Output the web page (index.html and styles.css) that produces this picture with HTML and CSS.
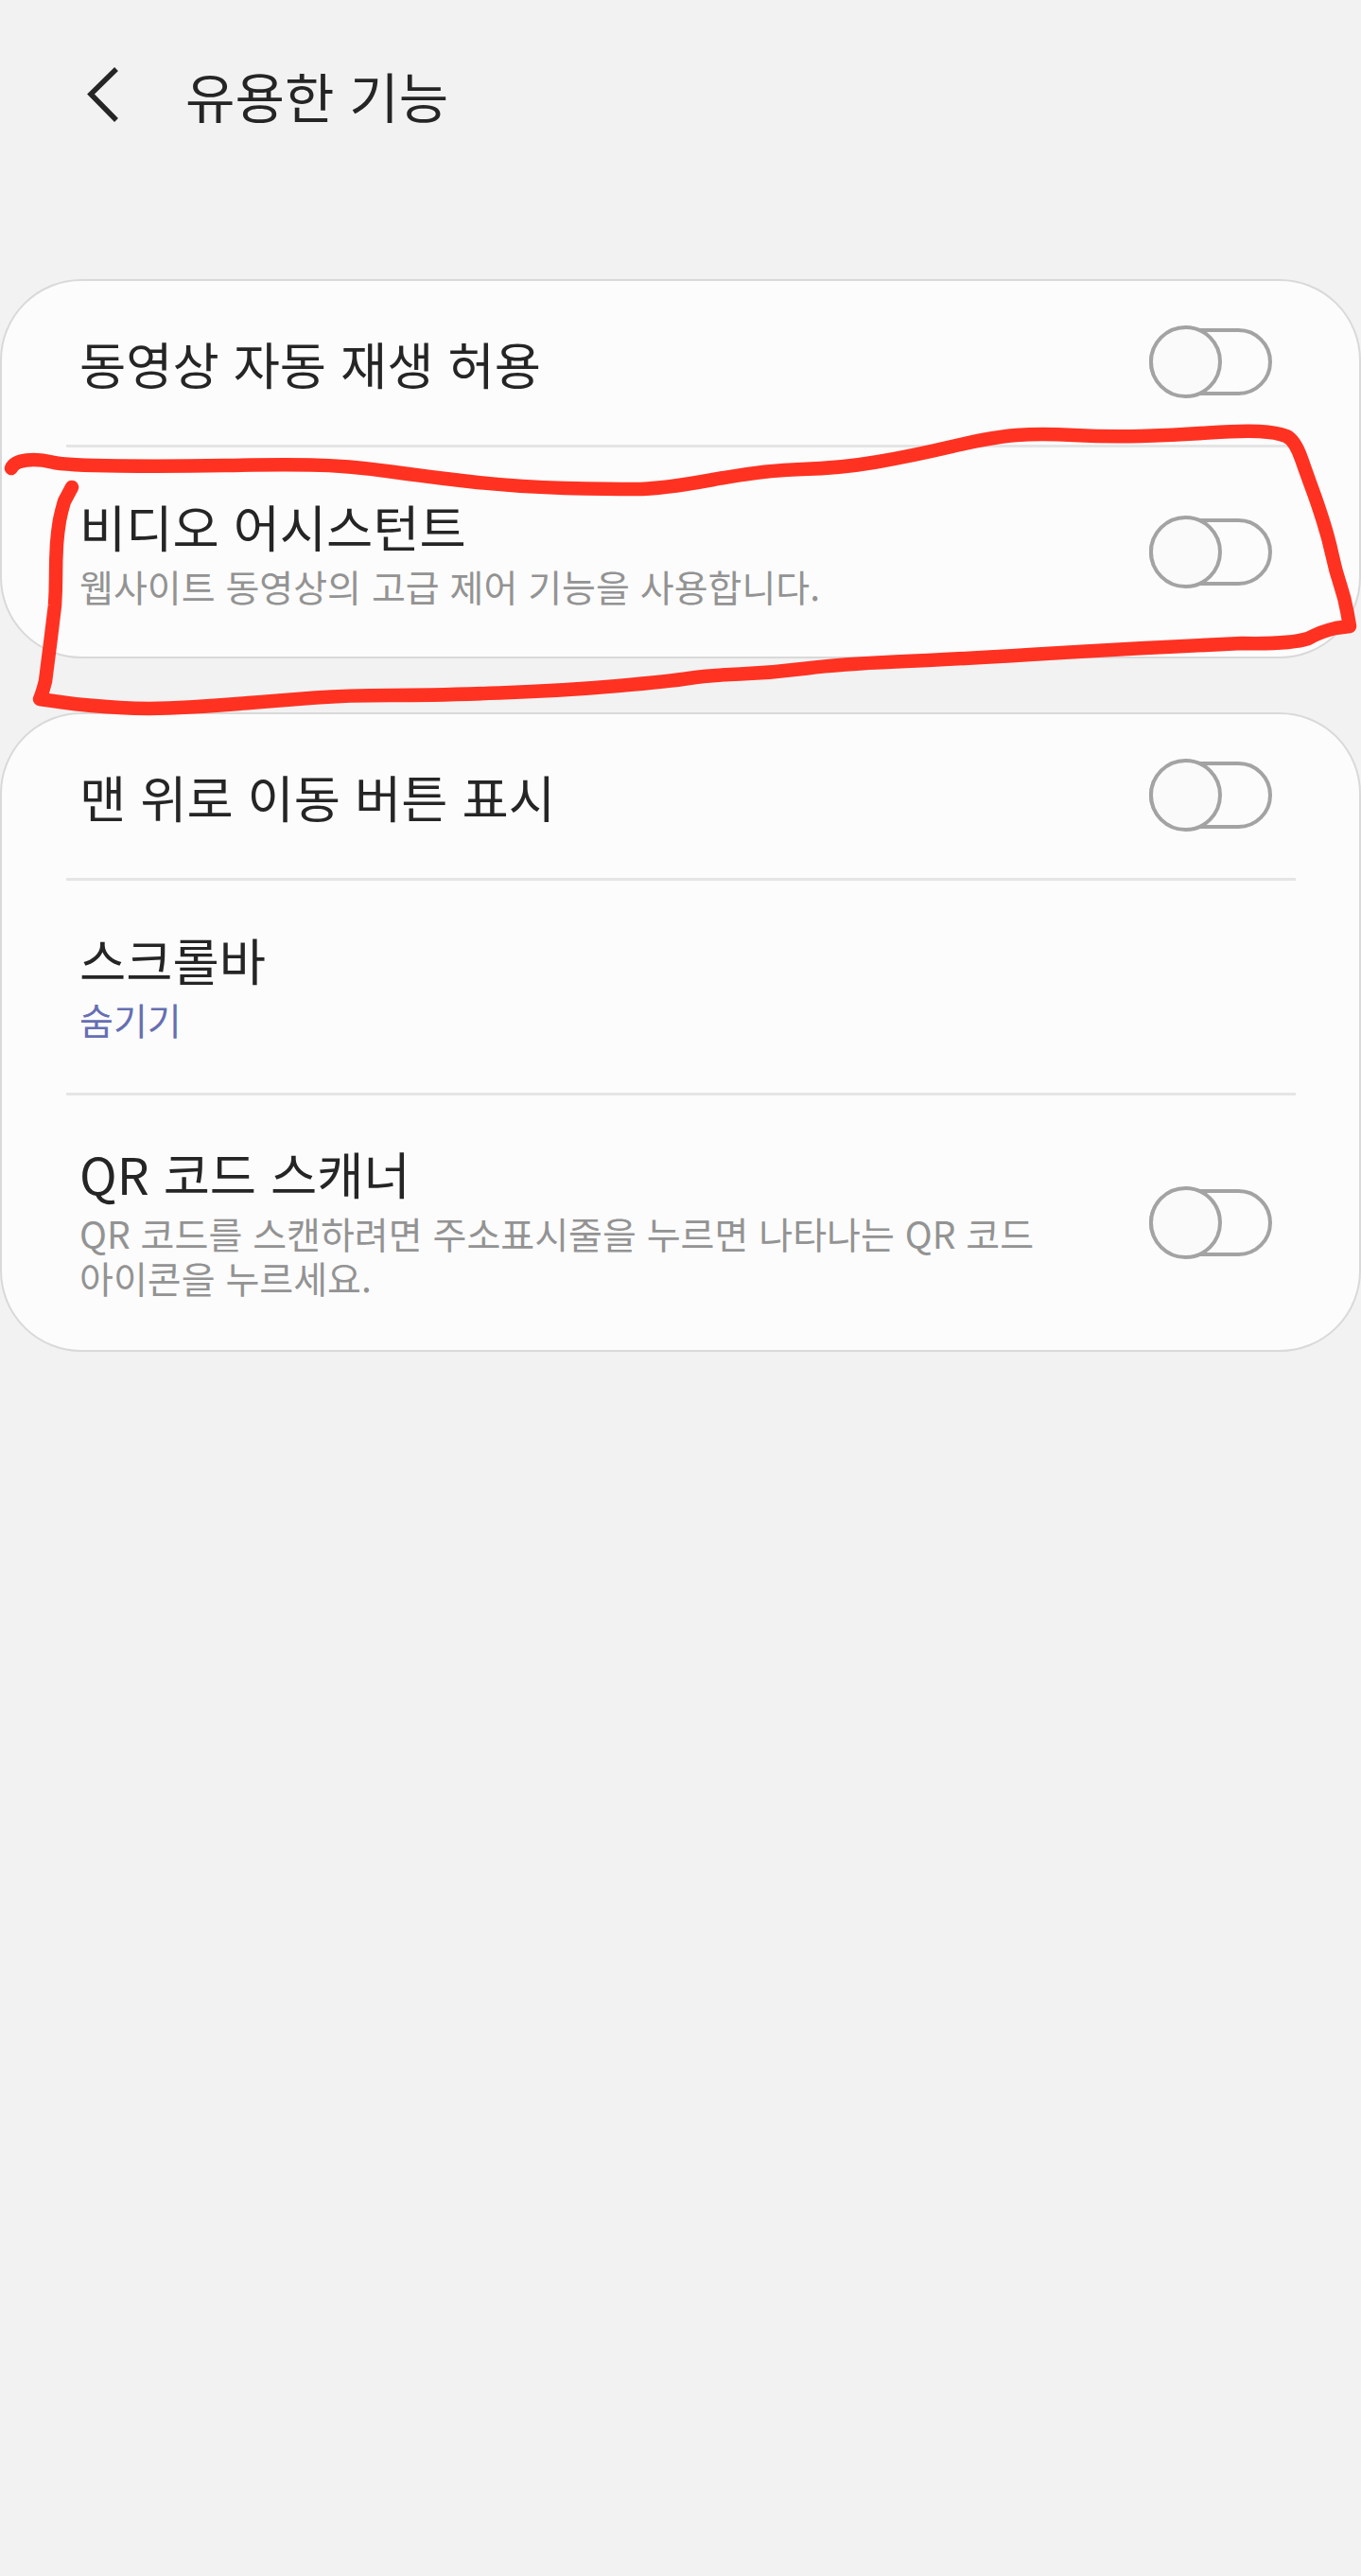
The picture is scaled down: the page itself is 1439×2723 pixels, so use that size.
FILE: index.html
```html
<!DOCTYPE html>
<html lang="ko">
<head>
<meta charset="utf-8">
<title>유용한 기능</title>
<link rel="stylesheet" href="styles.css">
</head>
<body>
<header class="appbar">
  <svg class="back" viewBox="0 0 36 60" aria-hidden="true"><path d="M32 3 L5 29.5 L32 57" /></svg>
  <h1 class="appbar-title">유용한 기능</h1>
</header>
<main class="cards">
  <section class="card">
    <div class="row row-single">
      <div class="row-text"><div class="row-title">동영상 자동 재생 허용</div></div>
      <div class="toggle"><span class="thumb"></span></div>
    </div>
    <div class="divider"></div>
    <div class="row row-double">
      <div class="row-text row-text-nudge">
        <div class="row-title">비디오 어시스턴트</div>
        <div class="row-sub">웹사이트 동영상의 고급 제어 기능을 사용합니다.</div>
      </div>
      <div class="toggle"><span class="thumb"></span></div>
    </div>
  </section>
  <section class="card">
    <div class="row row-single">
      <div class="row-text"><div class="row-title">맨 위로 이동 버튼 표시</div></div>
      <div class="toggle"><span class="thumb"></span></div>
    </div>
    <div class="divider"></div>
    <div class="row row-link">
      <div class="row-text row-text-up">
        <div class="row-title">스크롤바</div>
        <div class="row-sub row-sub-accent">숨기기</div>
      </div>
    </div>
    <div class="divider"></div>
    <div class="row row-triple">
      <div class="row-text row-text-up">
        <div class="row-title">QR 코드 스캐너</div>
        <div class="row-sub">QR 코드를 스캔하려면 주소표시줄을 누르면 나타나는 QR 코드 아이콘을 누르세요.</div>
      </div>
      <div class="toggle"><span class="thumb"></span></div>
    </div>
  </section>
</main>
<svg class="scribble" viewBox="0 0 1439 2723" aria-hidden="true">
  <path d="M12 495 Q15 488 28 486.5 Q41 485 55 488.5 Q69 492 126.5 492.5 Q184 493 237 492 Q290 491 328.5 491.5 Q367 492 413 498.5 Q459 505 505 510 Q551 515 597 516 Q643 517 671.5 517 Q700 517 754 507 Q808 497 848 496 Q888 495 926 488.5 Q964 482 1006.5 472 Q1049 462 1074.5 460 Q1100 458 1135.5 460 Q1171 462 1206.5 461 Q1242 460 1277.5 457.5 Q1313 455 1331.5 456 Q1350 457 1360 461 Q1369 465 1376 485 Q1383 505 1388 518.5 Q1393 532 1399 551 Q1405 570 1408.5 586.5 Q1412 603 1417 618 Q1422 633 1424.5 647.5 L1427 662 L1412 664 Q1398 667 1383 675 Q1365 681 1313 680 Q1313 680 1242 683.5 Q1171 687 1088.5 692 Q1006 697 947 699.5 Q888 702 853 706.5 Q818 711 782.5 712.5 Q747 714 728.5 717 Q710 720 653.5 725 Q597 730 528 732.5 Q459 735 413 735 Q367 735 333.5 737.5 Q300 740 270 742.5 Q240 745 200 747.5 Q161 750 126.5 748 Q92 746 67 742.5 L42 739 Q45 732 48 720 Q51 696 54 673 Q56 656 58 640 Q59 625 59 610 Q59 592 60 575 Q61 562 63 550 Q65 540 68 530 L76 515" />
</svg>
</body>
</html>
```
FILE: styles.css
```css
* { box-sizing: border-box; }
html, body { margin: 0; padding: 0; }
body {
  position: relative;
  width: 1439px;
  height: 2723px;
  overflow: hidden;
  background: #f2f2f2;
  color: #252525;
  font-family: "Noto Sans CJK KR", "Noto Sans", sans-serif;
}
.appbar {
  display: flex;
  align-items: center;
  height: 200px;
  margin-bottom: 95px;
  padding-left: 91px;
}
.back {
  width: 36px;
  height: 60px;
  margin-right: 69px;
  fill: none;
  stroke: #252525;
  stroke-width: 5.5;
}
.appbar-title {
  margin: 0;
  font-size: 57px;
  font-weight: 400;
  line-height: 1;
}
.cards { display: flex; flex-direction: column; gap: 57px; }
.card {
  background: #fcfcfc;
  border: 2px solid #d9d9d9;
  border-radius: 86px;
}
.row {
  display: flex;
  align-items: center;
  justify-content: space-between;
  padding: 0 92px 0 82px;
}
.row-single { height: 173px; }
.row-single .toggle { margin-bottom: 2px; }
.row-double { height: 221px; }
.row-link { height: 224px; }
.row-triple { height: 269px; }
.row-text {
  width: 1040px;
  word-break: keep-all;
}
.row-text-nudge { margin-bottom: 2px; }
.row-text-up { margin-bottom: 5px; }
.row-title {
  font-size: 53.5px;
  line-height: 68px;
}
.row-sub {
  margin-top: 6px;
  font-size: 39px;
  line-height: 47px;
  color: #939393;
}
.row-sub-accent { color: #666fb2; }
.divider {
  height: 3px;
  margin: 0 67px 0 68px;
  background: #e5e5e5;
}
.toggle {
  position: relative;
  flex: none;
  width: 130px;
  height: 71px;
  border: 4px solid #a3a3a3;
  border-radius: 36px;
  background: #fcfcfc;
}
.thumb {
  position: absolute;
  top: -7px;
  left: -4px;
  width: 77px;
  height: 77px;
  border: 4px solid #a3a3a3;
  border-radius: 50%;
  background: #fafafa;
}
.scribble {
  position: absolute;
  top: 0;
  left: 0;
  width: 1439px;
  height: 2723px;
  pointer-events: none;
  fill: none;
  stroke: #ff3222;
  stroke-width: 14.5;
  stroke-linejoin: round;
  stroke-linecap: round;
}
```
